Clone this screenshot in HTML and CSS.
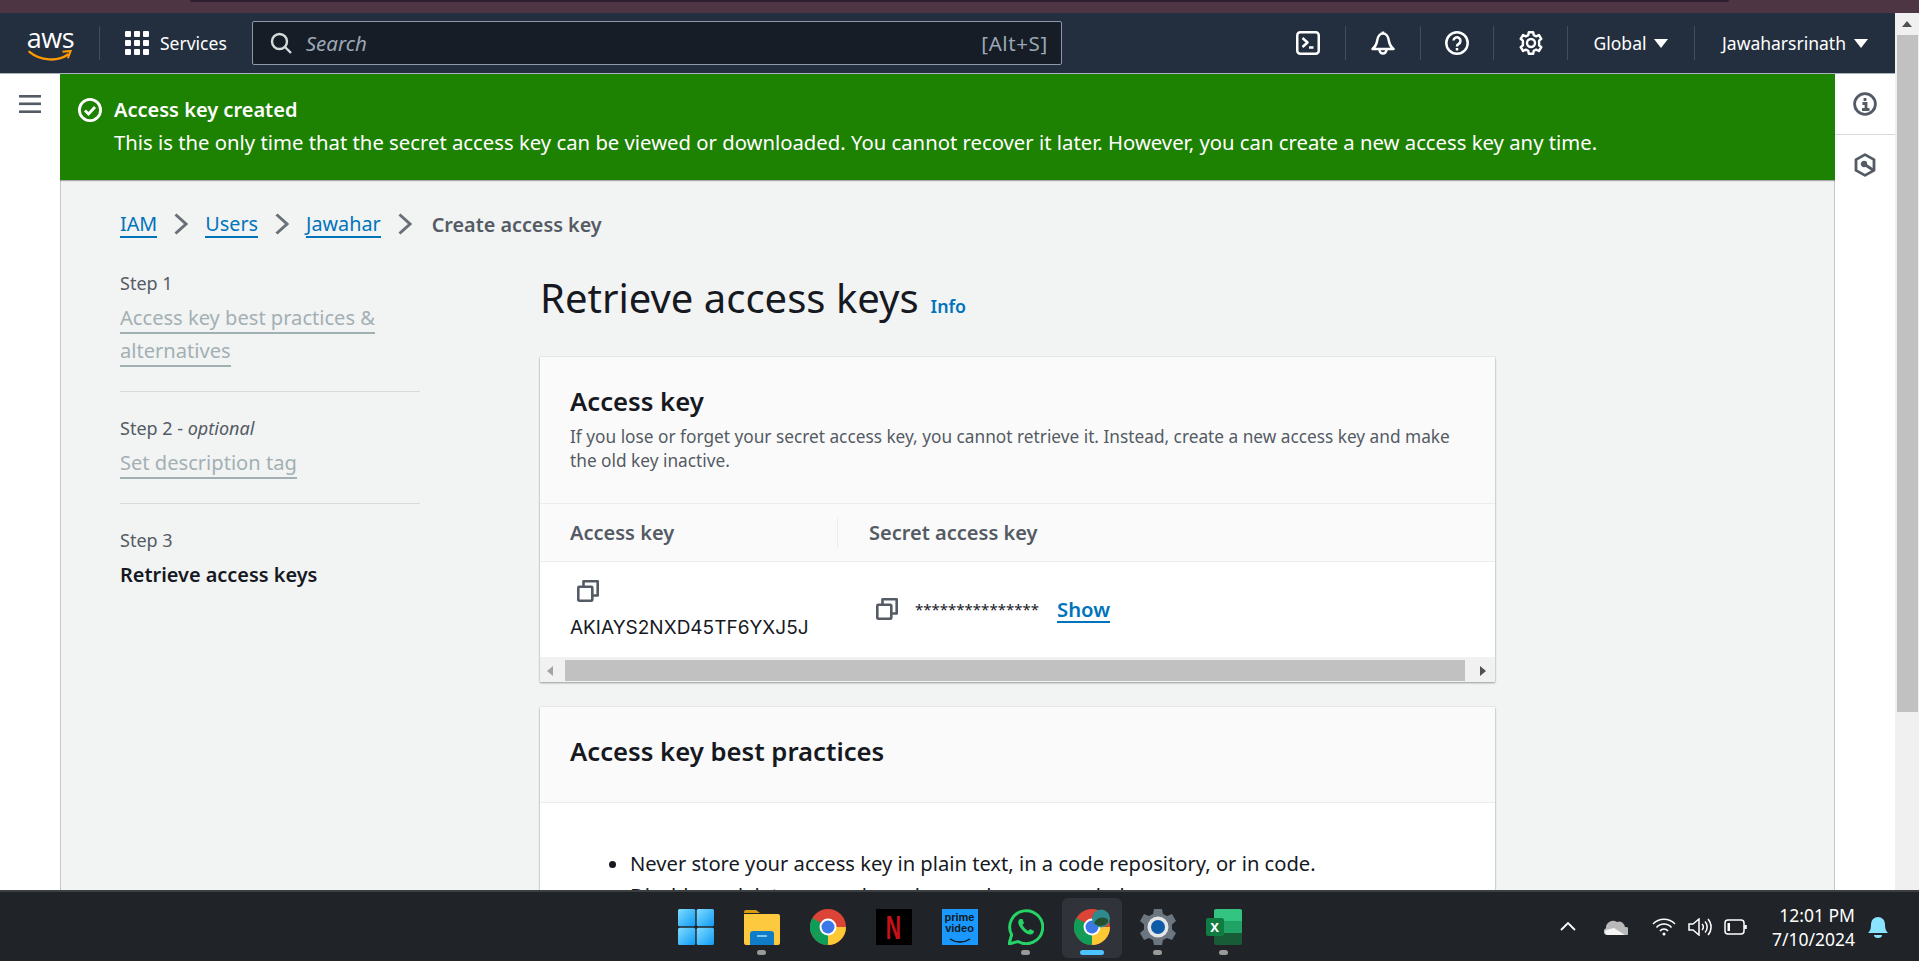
FILE: index.html
```html
<!DOCTYPE html>
<html lang="en">
<head>
<meta charset="utf-8">
<title>Retrieve access keys</title>
<link rel="stylesheet" href="styles.css">
</head>
<body>
<div class="titlestrip"><div class="titlestrip-dark"></div></div>
<div class="window">
  <div class="page">
    <header class="nav">
      <div class="logo">
        <span class="logo-text">aws</span>
        <svg class="smile" viewBox="0 0 48 12"><path d="M1 2c12 10 31 11 42 3" fill="none" stroke="#f90" stroke-width="2.600" stroke-linecap="round"/><path d="M37 2l9-1-3 8" fill="none" stroke="#f90" stroke-width="2.200"/></svg>
      </div>
      <span class="nav-div logo-div"></span>
      <svg class="grid-icon" viewBox="0 0 24 24" fill="#fff"><rect x="0" y="0" width="6" height="6" rx="1"/><rect x="9" y="0" width="6" height="6" rx="1"/><rect x="18" y="0" width="6" height="6" rx="1"/><rect x="0" y="9" width="6" height="6" rx="1"/><rect x="9" y="9" width="6" height="6" rx="1"/><rect x="18" y="9" width="6" height="6" rx="1"/><rect x="0" y="18" width="6" height="6" rx="1"/><rect x="9" y="18" width="6" height="6" rx="1"/><rect x="18" y="18" width="6" height="6" rx="1"/></svg>
      <span class="nav-text services">Services</span>
      <div class="search">
        <svg class="search-icon" viewBox="0 0 22 22" fill="none" stroke="#d5dbdb" stroke-width="2.400"><circle cx="9.500" cy="9.500" r="7.500"/><path d="M15 15l6 6"/></svg>
        <span class="search-text">Search</span>
        <span class="search-key">[Alt+S]</span>
      </div>
      <div class="nav-right">
        <span class="nav-cell cell-term"><svg class="nav-icon" viewBox="0 0 24 24" fill="none" stroke="#fff" stroke-width="2.500" stroke-linejoin="round"><rect x="1.250" y="1.250" width="21.500" height="21.500" rx="3"/><path d="M6.500 7l5 4.500-5 4.500"/><path d="M13 16.500h4.500"/></svg></span>
        <span class="nav-div"></span>
        <span class="nav-cell cell-bell"><svg class="nav-icon" viewBox="0 0 24 24" fill="none" stroke="#fff" stroke-width="2.500" stroke-linejoin="round"><path d="M12 .5v2"/><path d="M1.500 18c3-2.500 4.200-4.500 4.700-8.500C6.700 5.500 9 2.500 12 2.500s5.300 3 5.800 7c.5 4 1.700 6 4.700 8.500z"/><path d="M8.500 18.500a3.500 4 0 0 0 7 0"/></svg></span>
        <span class="nav-div"></span>
        <span class="nav-cell cell-help"><svg class="nav-icon" viewBox="0 0 24 24" fill="none" stroke="#fff" stroke-width="2.500"><circle cx="12" cy="12" r="10.700"/><path d="M8.500 9.500A3.500 3.500 0 1 1 13.500 13c-1 .5-1.500 1-1.500 2.500"/><path d="M12 17v2.500"/></svg></span>
        <span class="nav-div"></span>
        <span class="nav-cell cell-gear"><svg class="nav-icon" viewBox="0 0 24 24" fill="none" stroke="#fff" stroke-width="2.400" stroke-linejoin="round"><circle cx="12" cy="12" r="4"/><path d="M9.800 1.300h4.400l.6 2.900 2.400 1.200 2.700-1.400 2.400 3.800-2.200 1.900v4.600l2.200 1.900-2.400 3.800-2.700-1.400-2.400 1.200-.6 2.900H9.800l-.6-2.900-2.400-1.200-2.700 1.400-2.400-3.800 2.200-1.900V9.700L1.700 7.800l2.400-3.800 2.700 1.400 2.400-1.200z"/></svg></span>
        <span class="nav-div"></span>
        <span class="nav-menu nav-global"><span class="nav-text">Global</span><span class="caret"></span></span>
        <span class="nav-div"></span>
        <span class="nav-menu nav-user"><span class="nav-text">Jawaharsrinath</span><span class="caret"></span></span>
      </div>
    </header>
    <div class="body-row">
      <aside class="left-rail">
        <svg class="hamburger" viewBox="0 0 22 18" fill="#545b64"><rect width="22" height="2.600"/><rect y="7.500" width="22" height="2.600"/><rect y="15.400" width="22" height="2.600"/></svg>
      </aside>
      <main class="content">
        <div class="flash">
          <svg class="flash-icon" viewBox="0 0 24 24" fill="none" stroke="#fff"><circle cx="12" cy="12" r="10.600" stroke-width="2.800"/><path d="M7 12.500l3.500 3.500L17 9" stroke-width="2.800"/></svg>
          <div>
            <div class="flash-title">Access key created</div>
            <div class="flash-body">This is the only time that the secret access key can be viewed or downloaded. You cannot recover it later. However, you can create a new access key any time.</div>
          </div>
        </div>
        <div class="inner">
          <nav class="crumbs">
            <a class="link">IAM</a>
            <svg class="crumb-sep" viewBox="0 0 14 22" fill="none" stroke="#687078" stroke-width="3"><path d="M1.500 1.500l10.500 9.500-10.500 9.500"/></svg>
            <a class="link">Users</a>
            <svg class="crumb-sep" viewBox="0 0 14 22" fill="none" stroke="#687078" stroke-width="3"><path d="M1.500 1.500l10.500 9.500-10.500 9.500"/></svg>
            <a class="link">Jawahar</a>
            <svg class="crumb-sep" viewBox="0 0 14 22" fill="none" stroke="#687078" stroke-width="3"><path d="M1.500 1.500l10.500 9.500-10.500 9.500"/></svg>
            <span class="crumb-current">Create access key</span>
          </nav>
          <div class="layout">
            <ol class="steps">
              <li class="step">
                <div class="step-label">Step 1</div>
                <div class="step-link-wrap"><a class="step-link">Access key best practices &amp; alternatives</a></div>
              </li>
              <li class="step">
                <div class="step-label">Step 2 - <i>optional</i></div>
                <div class="step-link-wrap"><a class="step-link">Set description tag</a></div>
              </li>
              <li class="step">
                <div class="step-label">Step 3</div>
                <div class="step-active">Retrieve access keys</div>
              </li>
            </ol>
            <div class="main-col">
              <div class="title-row">
                <h1 class="page-title">Retrieve access keys</h1>
                <a class="info">Info</a>
              </div>
              <section class="card">
                <div class="card-head">
                  <h2 class="card-title">Access key</h2>
                  <p class="card-desc">If you lose or forget your secret access key, you cannot retrieve it. Instead, create a new access key and make the old key inactive.</p>
                </div>
                <div class="col-head">
                  <div class="col col-a">Access key</div>
                  <div class="col col-b">Secret access key</div>
                </div>
                <div class="key-row">
                  <div class="cell-a">
                    <svg class="copy copy-a" viewBox="0 0 22 22" fill="none" stroke="#545b64" stroke-width="2.600" stroke-linejoin="round"><rect x="1.300" y="6.800" width="14" height="13.900" rx="1"/><path d="M6.500 6V1.300h14.200V15.500h-5"/></svg>
                    <div class="key-value">AKIAYS2NXD45TF6YXJ5J</div>
                  </div>
                  <div class="cell-b">
                    <svg class="copy" viewBox="0 0 22 22" fill="none" stroke="#545b64" stroke-width="2.600" stroke-linejoin="round"><rect x="1.300" y="6.800" width="14" height="13.900" rx="1"/><path d="M6.500 6V1.300h14.200V15.500h-5"/></svg>
                    <span class="stars">***************</span>
                    <a class="show">Show</a>
                  </div>
                </div>
                <div class="hscroll">
                  <span class="arrow-left"></span>
                  <span class="hthumb"></span>
                  <span class="arrow-right"></span>
                </div>
              </section>
              <section class="card card-second">
                <div class="card-head card-head-second">
                  <h2 class="card-title">Access key best practices</h2>
                </div>
                <ul class="practices">
                  <li>Never store your access key in plain text, in a code repository, or in code.</li>
                  <li>Disable or delete access key when no longer needed.</li>
                </ul>
              </section>
            </div>
          </div>
        </div>
      </main>
      <aside class="right-rail">
        <div class="rail-cell rail-first">
          <svg class="rail-icon" viewBox="0 0 24 24" fill="none" stroke="#545b64" stroke-width="2.800"><circle cx="12" cy="12" r="10.400"/><path d="M12 6v3M9.500 11.500H13V17.500M9 17.500h7.500"/></svg>
        </div>
        <div class="rail-cell">
          <svg class="rail-icon" viewBox="0 0 24 24" fill="none" stroke="#545b64" stroke-width="2.800" stroke-linejoin="round"><path d="M12 1.600l9 5v10.800l-9 5-9-5V6.600z"/><circle cx="11" cy="11" r="1.800" fill="#545b64"/><path d="M11 11l9 6"/></svg>
        </div>
      </aside>
    </div>
  </div>
  <div class="vscroll">
    <span class="arrow-up"></span>
    <span class="vthumb"></span>
  </div>
</div>
<footer class="taskbar">
  <div></div>
  <div class="apps">
    <div class="app">
      <svg class="app-icon" viewBox="0 0 36 36"><defs><linearGradient id="win" x1="0" y1="0" x2="1" y2="1"><stop offset="0" stop-color="#7fdcff"/><stop offset="1" stop-color="#0f9bf5"/></linearGradient></defs><rect x="0" y="0" width="17.300" height="17.300" rx="1.500" fill="url(#win)"/><rect x="18.700" y="0" width="17.300" height="17.300" rx="1.500" fill="url(#win)"/><rect x="0" y="18.700" width="17.300" height="17.300" rx="1.500" fill="url(#win)"/><rect x="18.700" y="18.700" width="17.300" height="17.300" rx="1.500" fill="url(#win)"/></svg>
    </div>
    <div class="app">
      <svg class="app-icon" viewBox="0 0 36 36"><path d="M0 3a2 2 0 0 1 2-2h10l4 3h-16z" fill="#d99a0b"/><path d="M0 5h34a2 2 0 0 1 2 2v27a2 2 0 0 1-2 2H2a2 2 0 0 1-2-2z" fill="#fcc93f"/><path d="M6 36v-11a3 3 0 0 1 3-3h18a3 3 0 0 1 3 3v11z" fill="#0f7cc8"/><rect x="13" y="26" width="10" height="2" fill="#7cc6f2"/></svg>
      <span class="dot"></span>
    </div>
    <div class="app">
      <svg class="app-icon" viewBox="0 0 36 36"><circle cx="18" cy="18" r="18" fill="#db4437"/><path d="M18 18L2.400 27A18 18 0 0 1 2.400 9z" fill="#0f9d58"/><path d="M2.400 27L18 18l15.600 0L18 36A18 18 0 0 1 2.400 27z" fill="#0f9d58"/><path d="M18 18h18a18 18 0 0 1-18 18z" fill="#fcc934"/><circle cx="18" cy="18" r="8.500" fill="#fff"/><circle cx="18" cy="18" r="6.500" fill="#3c78e8"/></svg>
    </div>
    <div class="app">
      <div class="netflix"><span class="netflix-n">N</span></div>
    </div>
    <div class="app">
      <div class="prime"><span class="prime-text">prime<br>video</span><svg class="prime-smile" viewBox="0 0 24 6"><path d="M2 1c6 4 14 4 20 0" fill="none" stroke="#111" stroke-width="1.500"/></svg></div>
    </div>
    <div class="app">
      <svg class="app-icon" viewBox="0 0 36 36" fill="none"><path d="M1 35l2.600-9.200A16.500 16.500 0 1 1 10 32.500z" stroke="#25d366" stroke-width="3"/><path d="M12 10c-2 1-2.500 4 0 8s6 7 9.500 7.500c3 .5 4.500-1.500 4.500-3.500l-4-2-1.500 1.800c-2-.6-5-3.500-6-6l1.500-1.500-1.500-4.300z" fill="#25d366"/></svg>
      <span class="dot"></span>
    </div>
    <div class="app app-active">
      <svg class="app-icon" viewBox="0 0 36 36"><circle cx="18" cy="18" r="18" fill="#db4437"/><path d="M18 18L2.400 27A18 18 0 0 1 2.400 9z" fill="#0f9d58"/><path d="M2.400 27L18 18l15.600 0L18 36A18 18 0 0 1 2.400 27z" fill="#0f9d58"/><path d="M18 18h18a18 18 0 0 1-18 18z" fill="#fcc934"/><circle cx="18" cy="18" r="8.500" fill="#fff"/><circle cx="18" cy="18" r="6.500" fill="#3c78e8"/><circle cx="27" cy="9.500" r="9" fill="#2d8a8f"/><path d="M20 14c3-6 11-7 14-3v2a9 9 0 0 1-14 1z" fill="#24502f"/></svg>
      <span class="bar"></span>
    </div>
    <div class="app">
      <svg class="app-icon" viewBox="0 0 36 36"><path d="M14 0h8l1 5 4 2 5-2 4 7-4 3.500v5l4 3.500-4 7-5-2-4 2-1 5h-8l-1-5-4-2-5 2-4-7 4-3.500v-5L0 12l4-7 5 2 4-2z" fill="#6b7680"/><circle cx="18" cy="18" r="10.500" fill="#e6e6e6"/><circle cx="18" cy="18" r="7" fill="#0d5ca8"/></svg>
      <span class="dot"></span>
    </div>
    <div class="app">
      <div class="excel"><span class="excel-x">X</span></div>
      <span class="dot"></span>
    </div>
  </div>
  <div class="tray">
    <svg class="tray-chevron" viewBox="0 0 16 9" fill="none" stroke="#fff" stroke-width="1.800"><path d="M1 8l7-7 7 7"/></svg>
    <svg class="tray-cloud" viewBox="0 0 24 16"><path d="M3 16a3.500 3.500 0 0 1-1-6.800A7 7 0 0 1 13 3a6 6 0 0 1 8 5 4 4 0 0 1 1 8z" fill="#b9b9b9"/><path d="M3 16a3 3 0 0 1-1-5l8-2 11 7z" fill="#f4f4f4"/></svg>
    <svg class="tray-icon" viewBox="0 0 24 18" fill="none" stroke="#fff" stroke-width="1.500"><path d="M1 6a15 15 0 0 1 22 0M4.500 9.500a10 10 0 0 1 15 0M8 13a5 5 0 0 1 8 0"/><circle cx="12" cy="16" r="1.500" fill="#fff" stroke="none"/></svg>
    <svg class="tray-icon" viewBox="0 0 24 18" fill="none" stroke="#fff" stroke-width="1.500"><path d="M1 6h4l6-5v16l-6-5H1z"/><path d="M14 6a4 4 0 0 1 0 6M17 3.500a8 8 0 0 1 0 11M20 1a12 12 0 0 1 0 16"/></svg>
    <svg class="tray-icon" viewBox="0 0 24 16" fill="none" stroke="#fff" stroke-width="1.500"><rect x="1" y="1" width="19" height="14" rx="3"/><rect x="3.500" y="4" width="2.500" height="8" fill="#fff" stroke="none"/><path d="M21.500 6v4" stroke-width="2.500"/></svg>
    <div class="clock"><div>12:01 PM</div><div>7/10/2024</div></div>
    <svg class="tray-bell" viewBox="0 0 20 23" fill="#8be4ff"><path d="M0 18c2-2 3-4 3-9a7 7 0 0 1 14 0c0 5 1 7 3 9z"/><path d="M6 20h8a4 3 0 0 1-8 0z"/></svg>
  </div>
</footer>
</body>
</html>
```
FILE: styles.css
```css
* { box-sizing: border-box; }
html, body { margin: 0; height: 100%; overflow: hidden; }
body {
  display: flex;
  flex-direction: column;
  height: 961px;
  font-family: "Noto Sans", "Open Sans", Arial, sans-serif;
  color: #16191f;
  background: #fff;
}
p, h1, h2, ol, ul { margin: 0; padding: 0; }
a { color: inherit; }

.titlestrip { height: 13px; background: #4d3543; flex: none; }
.titlestrip-dark { height: 2px; margin: 0 190px; background: #2e1f2e; border-radius: 0 0 6px 6px; }

.window { flex: 1; min-height: 0; display: flex; }
.page { flex: 1; min-width: 0; display: flex; flex-direction: column; }

/* top nav */
.nav {
  height: 61px;
  flex: none;
  display: flex;
  align-items: center;
  background: #232f3e;
  border-bottom: 1px solid #aab2bb;
  color: #fff;
  padding-left: 27px;
}
.logo { width: 47px; height: 36px; display: flex; flex-direction: column; align-items: center; }
.logo-text { font-size: 27px; line-height: 25px; letter-spacing: -.5px; font-family: "Open Sans", sans-serif; }
.smile { width: 47px; height: 12px; }
.nav-div { width: 1px; height: 34px; background: #414d5c; flex: none; }
.logo-div { margin: 0 25px; }
.grid-icon { width: 24px; height: 24px; flex: none; }
.nav-text { font-size: 17.500px; line-height: 20px; white-space: nowrap; }
.services { margin: 0 25px 0 11px; }
.search {
  width: 810px;
  height: 44px;
  flex: none;
  display: flex;
  align-items: center;
  background: #161d26;
  border: 1px solid #8d99a8;
  border-radius: 2px;
  padding: 0 13px 0 17px;
}
.search-icon { width: 22px; height: 22px; flex: none; }
.search-text { margin-left: 14px; font-style: italic; font-size: 20.500px; color: #9ba7b6; flex: 1; }
.search-key { font-size: 20.500px; letter-spacing: .6px; color: #9ba7b6; }
.nav-right { margin-left: auto; display: flex; align-items: center; }
.nav-cell { display: flex; justify-content: center; flex: none; }
.cell-term { width: 74px; }
.cell-bell { width: 74px; }
.cell-help { width: 72px; }
.cell-gear { width: 73px; }
.nav-icon { width: 24px; height: 24px; display: block; }
.nav-menu { display: flex; align-items: center; justify-content: center; gap: 8px; }
.nav-global { width: 126px; }
.nav-user { width: 200px; }
.caret { width: 0; height: 0; border: 7px solid transparent; border-top: 9px solid #fff; border-bottom: 0; }

/* body */
.body-row { flex: 1; min-height: 0; display: flex; }
.left-rail { width: 60px; flex: none; background: #fff; padding: 21px 0 0 19px; }
.hamburger { width: 22px; height: 18px; display: block; }
.content {
  flex: 1;
  min-width: 0;
  display: flex;
  flex-direction: column;
  background: #f2f3f3;
  overflow: hidden;
}
.right-rail { width: 60px; flex: none; background: #fff; }
.rail-cell { display: flex; justify-content: center; padding-top: 18px; }
.rail-first { height: 61px; border-bottom: 1px solid #d5dbdb; }
.rail-icon { width: 24px; height: 24px; }

.flash {
  height: 106px;
  flex: none;
  background: #1d8102;
  color: #fff;
  display: flex;
  gap: 12px;
  padding: 23px 18px;
  box-shadow: 0 1px 1px rgba(0,0,0,.3);
  position: relative;
}
.flash-icon { width: 24px; height: 24px; flex: none; margin-top: 1px; }
.flash-title { font-size: 20px; line-height: 26px; font-weight: 600; }
.flash-body { margin-top: 3px; font-size: 20.300px; line-height: 33px; white-space: nowrap; }

.inner { flex: 1; min-height: 0; padding: 30px 0 0 59px; border-left: 1px solid #c4c9cc; border-right: 1px solid #c4c9cc; }
.crumbs { display: flex; align-items: center; height: 28px; font-size: 19.800px; }
.link { color: #0073bb; border-bottom: 2px solid #0073bb; line-height: 25px; }
.crumb-sep { width: 14px; height: 22px; margin: 0 17px; flex: none; }
.crumb-current { color: #545b64; font-weight: 600; margin-left: 3px; }

.layout { display: flex; }
.steps { width: 300px; flex: none; list-style: none; padding-top: 33px; }
.step { padding-bottom: 24px; margin-bottom: 24px; border-bottom: 1px solid #d5dbdb; }
.step:last-child { border-bottom: 0; }
.step-label { font-size: 18px; line-height: 25px; color: #545b64; }
.step-link-wrap { margin-top: 5px; font-size: 20.100px; line-height: 33px; }
.step-link { color: #a3b0b3; border-bottom: 2px solid #a3b0b3; padding-bottom: 1px; }
.step-active { margin-top: 9px; font-size: 19.900px; line-height: 25px; font-weight: 600; }

.main-col { margin-left: 120px; width: 955px; flex: none; }
.title-row { display: flex; align-items: baseline; height: 119px; padding-top: 35px; }
.page-title { font-size: 40px; line-height: 50px; font-weight: 400; }
.info { margin-left: 12px; font-size: 17.800px; font-weight: 600; color: #0073bb; }

.card { background: #fff; box-shadow: 0 1px 2px rgba(0,0,0,.35), 0 0 1px rgba(0,0,0,.2); }
.card-head { height: 147px; background: #fafafa; padding: 27px 30px 0; border-bottom: 1px solid #eaeded; }
.card-title { font-size: 25.700px; line-height: 36px; font-weight: 600; }
.card-desc { margin-top: 5px; font-size: 17.250px; line-height: 24px; color: #545b64; }
.col-head { height: 58px; display: flex; align-items: center; background: #fafafa; border-bottom: 1px solid #eaeded; font-size: 20px; font-weight: 600; color: #545b64; }
.col { height: 30px; line-height: 30px; }
.col-a { width: 298px; padding-left: 30px; border-right: 1px solid #eaeded; }
.col-b { padding-left: 31px; }
.key-row { height: 95px; display: flex; background: #fff; }
.cell-a { width: 298px; padding: 18px 0 0 30px; }
.copy { width: 22px; height: 22px; display: block; flex: none; }
.copy-a { margin-left: 7px; }
.key-value { margin-top: 13px; font-family: Inter, "Noto Sans", sans-serif; font-size: 19px; line-height: 25px; }
.cell-b { display: flex; align-items: center; padding: 0 0 0 38px; margin-top: -2px; }
.stars { margin-left: 17px; font-size: 15px; line-height: 22px; }
.show { margin: 2px 0 0 18px; font-size: 20.300px; font-weight: 600; color: #0073bb; border-bottom: 2px solid #0073bb; line-height: 24px; }

.hscroll { height: 25px; display: flex; align-items: center; background: #f1f1f1; padding: 2px 0 0 7px; }
.hthumb { width: 900px; height: 21px; background: #c1c1c1; margin: 0 15px 0 12px; }
.arrow-left { border: 5px solid transparent; border-right: 6px solid #a3a3a3; border-left: 0; }
.arrow-right { border: 5px solid transparent; border-left: 6px solid #505050; border-right: 0; }

.card-second { margin-top: 25px; }
.card-head-second { height: 96px; padding-top: 27px; }
.practices { padding: 44px 0 0 90px; font-size: 20.160px; line-height: 32px; }

/* page scrollbar */
.vscroll { width: 24px; flex: none; background: #f0f0f0; display: flex; flex-direction: column; align-items: center; padding-top: 8px; }
.arrow-up { border: 5px solid transparent; border-bottom: 6px solid #505050; border-top: 0; }
.vthumb { width: 21px; height: 677px; margin: 8px 0 0 1px; background: #c1c1c1; }

/* taskbar */
.taskbar {
  height: 71px;
  flex: none;
  display: grid;
  grid-template-columns: 1fr auto 1fr;
  background: #202327;
  border-top: 2px solid #3c3f42;
  color: #fff;
}
.apps { display: flex; gap: 30px; padding-top: 17px; }
.app { width: 36px; height: 36px; position: relative; }
.app-icon { width: 36px; height: 36px; display: block; }
.app-active::before { content: ""; position: absolute; left: -12px; right: -12px; top: -11px; height: 60px; background: #30343a; border-radius: 6px; }
.app-active .app-icon { position: relative; }
.dot { position: absolute; left: 13px; top: 41px; width: 9px; height: 5px; border-radius: 3px; background: #9a9a9a; }
.bar { position: absolute; left: 6px; top: 41px; width: 24px; height: 5px; border-radius: 3px; background: #4cc2ff; }
.netflix { width: 36px; height: 36px; background: #000; color: #c8101a; font-size: 34px; line-height: 36px; text-align: center; font-weight: 700; font-family: "Liberation Sans", sans-serif; }
.netflix-n { display: inline-block; transform: scaleX(.62); }
.prime { width: 36px; height: 36px; background: #1a98ff; color: #101820; text-align: center; position: relative; }
.prime-text { display: block; padding-top: 3px; font-size: 11px; line-height: 11px; font-weight: 700; font-family: "Liberation Sans", sans-serif; }
.prime-smile { position: absolute; left: 6px; bottom: 1px; width: 24px; height: 6px; }
.excel { width: 28px; height: 36px; margin-left: 8px; background: linear-gradient(#33c481 0 33%, #21a366 33% 66%, #185c37 66%); border-radius: 2px; position: relative; }
.excel-x { position: absolute; left: -8px; top: 9px; width: 18px; height: 18px; background: #107c41; border-radius: 2px; color: #fff; font-size: 13px; line-height: 18px; font-weight: 700; text-align: center; }

.tray { display: flex; align-items: center; justify-content: flex-end; padding: 0 31px 0 0; }
.tray-chevron { width: 16px; height: 9px; margin-right: 28px; }
.tray-cloud { width: 24px; height: 16px; margin-right: 24px; }
.tray-icon { width: 24px; height: 18px; margin-right: 12px; }
.clock { font-size: 17.500px; line-height: 24px; text-align: right; margin: 0 13px 0 -4px; padding-left: 16px; }
.tray-bell { width: 20px; height: 23px; }
```
